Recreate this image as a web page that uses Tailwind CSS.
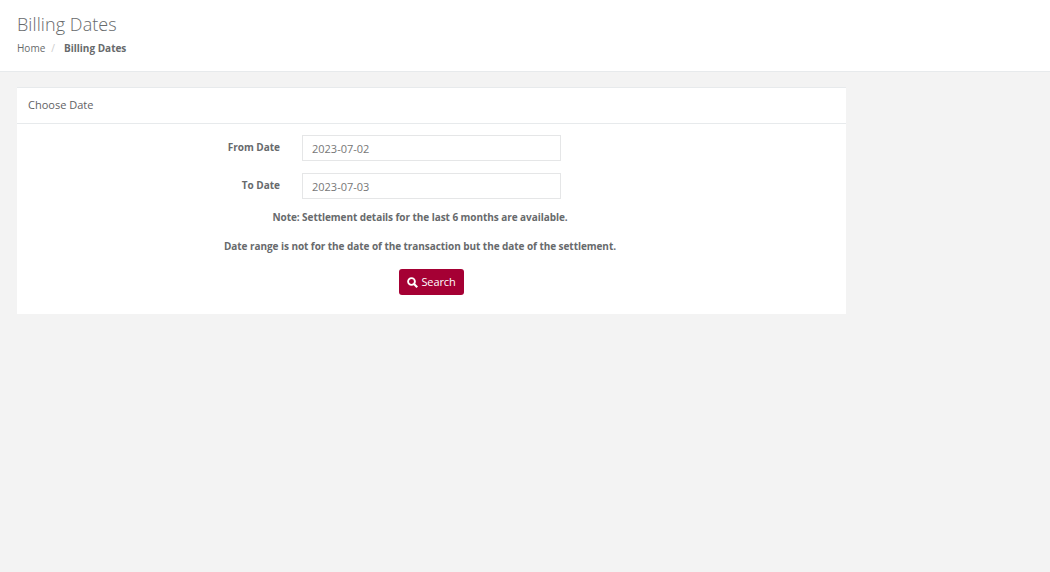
<!DOCTYPE html>
<html lang="en">
<head>
    <meta charset="UTF-8">
    <script src="https://cdn.jsdelivr.net/npm/@tailwindcss/browser@4"></script>
    <title>Billing Dates</title>
</head>
<body class="bg-[#f3f3f3] min-h-screen font-['Open_Sans',sans-serif] text-[#676a6c] overflow-hidden">

    <!-- Page heading -->
    <div class="bg-white border-b border-[#e7eaec] h-[72px] px-[17px] pt-[12px]">
        <h2 class="text-[18px] leading-[24px] font-light tracking-[0.08px] text-[#676a6c]">Billing Dates</h2>
        <div class="flex mt-[5px] text-[10px] leading-[14px]">
            <span>Home</span>
            <span class="text-[#ccc] ml-[6px] mr-[9px]">/</span>
            <strong class="font-bold">Billing Dates</strong>
        </div>
    </div>

    <!-- Card -->
    <div class="w-[829px] ml-[17px] mt-[15px] bg-white border-t border-[#e7eaec]">
        <div class="h-[36px] px-[11px] flex items-center border-b border-[#e7eaec] text-[11px] font-normal text-[#5f6264]">Choose Date</div>
        <div class="pt-[11px] pb-[19px]">
            <div class="flex items-center h-[26px]">
                <label class="w-[263px] text-right text-[10px] font-bold -mt-[1px]">From Date</label>
                <input type="text" value="2023-07-02" class="ml-[22px] w-[259px] h-[26px] border border-[#e5e6e7] px-[9px] text-[11px] text-[#777] outline-none">
            </div>
            <div class="flex items-center h-[26px] mt-[12px]">
                <label class="w-[263px] text-right text-[10px] font-bold -mt-[2px]">To Date</label>
                <input type="text" value="2023-07-03" class="ml-[22px] w-[259px] h-[26px] border border-[#e5e6e7] px-[9px] text-[11px] text-[#777] outline-none">
            </div>
            <p class="w-[806px] text-center text-[10px] leading-[14px] font-bold tracking-[-0.06px] mt-[11px]">Note: Settlement details for the last 6 months are available.</p>
            <p class="w-[806px] text-center text-[10px] leading-[14px] font-bold tracking-[-0.06px] mt-[15px]">Date range is not for the date of the transaction but the date of the settlement.</p>
            <div class="w-[829px] flex mt-[16px] pl-[382px]">
                <button type="button" class="w-[65px] h-[26px] bg-[#a50034] rounded-[3px] text-white text-[11px] tracking-[-0.1px] flex items-center justify-center gap-[3px]">
                    <svg width="11" height="11" viewBox="0 0 10 10" fill="none" stroke="white"><circle cx="4.1" cy="4.1" r="3.1" stroke-width="1.7"/><path d="M6.4 6.4L9.3 9.3" stroke-width="2"/></svg>
                    Search
                </button>
            </div>
        </div>
    </div>

</body>
</html>
